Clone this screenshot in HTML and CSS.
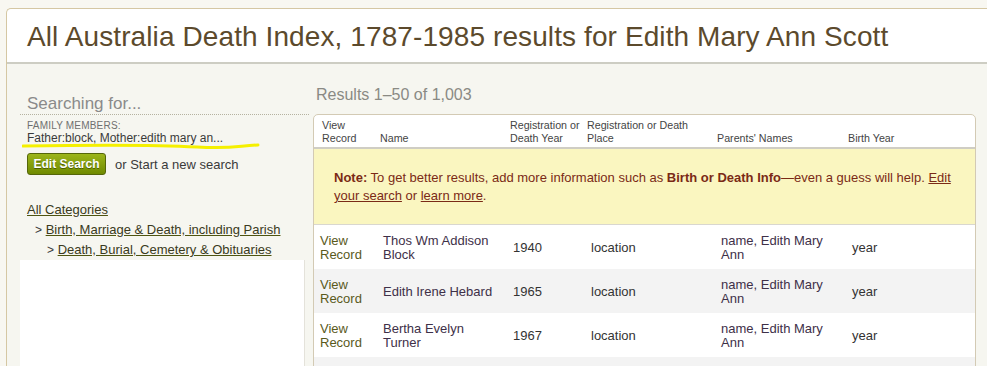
FILE: index.html
```html
<!DOCTYPE html>
<html lang="en">
<head>
    <meta charset="UTF-8">
    <title>All Australia Death Index results</title>
    <link rel="stylesheet" href="styles.css">
</head>
<body>
    <div class="frame">
        <div class="masthead">
            <h1 class="title">All Australia Death Index, 1787-1985 results for Edith Mary Ann Scott</h1>
        </div>

        <div class="content">
            <div class="sidebar">
                <div class="searching">Searching for...</div>
                <div class="family-label">FAMILY MEMBERS:</div>
                <div class="family-value">
                    Father:block, Mother:edith mary an...
                    <svg class="marker" width="240" height="8" viewBox="0 0 240 8">
                        <path d="M1 4 C 60 3, 140 3, 175 5 S 215 4, 236 3" stroke="#f5f000" stroke-width="3" fill="none" stroke-linecap="round"/>
                    </svg>
                </div>
                <div class="search-actions">
                    <button class="edit-btn">Edit Search</button>
                    <span class="new-search">or Start a new search</span>
                </div>

                <div class="categories">
                    <a href="#" class="cat-link">All Categories</a>
                    <div class="cat-sub"><span class="gt">&gt;</span> <a href="#" class="cat-link">Birth, Marriage &amp; Death, including Parish</a></div>
                    <div class="cat-sub deeper"><span class="gt">&gt;</span> <a href="#" class="cat-link">Death, Burial, Cemetery &amp; Obituaries</a></div>
                </div>

                <div class="ad-box"></div>
            </div>

            <div class="results">
                <div class="results-count">Results 1&ndash;50 of 1,003</div>

                <div class="table-card">
                    <div class="table-head">
                        <div>View<br>Record</div>
                        <div>Name</div>
                        <div>Registration or<br>Death Year</div>
                        <div>Registration or Death<br>Place</div>
                        <div>Parents' Names</div>
                        <div>Birth Year</div>
                    </div>

                    <div class="note">
                        <b>Note:</b> To get better results, add more information such as <b>Birth or Death Info</b>&mdash;even a guess will help. <a href="#">Edit your search</a> or <a href="#">learn more</a>.
                    </div>

                    <div class="row">
                        <a href="#" class="view">View<br>Record</a>
                        <div class="name">Thos Wm Addison Block</div>
                        <div>1940</div>
                        <div>location</div>
                        <div class="name">name, Edith Mary Ann</div>
                        <div>year</div>
                    </div>
                    <div class="row alt">
                        <a href="#" class="view">View<br>Record</a>
                        <div class="name">Edith Irene Hebard</div>
                        <div>1965</div>
                        <div>location</div>
                        <div class="name">name, Edith Mary Ann</div>
                        <div>year</div>
                    </div>
                    <div class="row">
                        <a href="#" class="view">View<br>Record</a>
                        <div class="name">Bertha Evelyn Turner</div>
                        <div>1967</div>
                        <div>location</div>
                        <div class="name">name, Edith Mary Ann</div>
                        <div>year</div>
                    </div>
                    <div class="row alt"></div>
                </div>
            </div>
        </div>
    </div>
</body>
</html>
```

FILE: styles.css
```css
* {
    margin: 0;
    padding: 0;
    box-sizing: border-box;
}

body {
    font-family: 'Liberation Sans', Arial, sans-serif;
    background: #f8f7f1;
    color: #333;
    overflow: hidden;
    height: 366px;
}

.frame {
    margin: 8px 0 0 6px;
    border-top: 1px solid #d5c7a3;
    border-left: 1px solid #d5c7a3;
    border-top-left-radius: 5px;
    background: #f6f6f0;
    height: 400px;
}

.masthead {
    background: #fff;
    height: 55px;
    border-bottom: 2px solid #cdcdc3;
    border-top-left-radius: 5px;
    padding: 12px 0 0 20px;
}

.title {
    font-size: 28px;
    font-weight: normal;
    color: #5c4a2c;
    letter-spacing: 0.1px;
    white-space: nowrap;
}

.content {
    display: flex;
}

/* left column */
.sidebar {
    width: 306px;
    padding: 31px 0 0 13px;
}

.searching,
.family-label,
.family-value,
.search-actions,
.categories {
    padding-left: 7px;
}

.searching {
    font-size: 17px;
    line-height: 18px;
    color: #8a8a8a;
    padding-bottom: 1px;
    border-bottom: 1px dotted #b5b2a0;
    margin-right: 4px;
}

.family-label {
    font-size: 10px;
    line-height: 11px;
    color: #6f6f6f;
    margin-top: 5px;
    letter-spacing: 0.2px;
}

.family-value {
    position: relative;
    font-size: 12px;
    line-height: 14px;
    color: #3a3a3a;
}

.marker {
    position: absolute;
    left: 2px;
    top: 11px;
}

.search-actions {
    display: flex;
    align-items: center;
    gap: 9px;
    margin-top: 8px;
}

.edit-btn {
    font-family: 'Liberation Sans', Arial, sans-serif;
    font-size: 12px;
    font-weight: bold;
    color: #fff;
    background: linear-gradient(#9cb51a, #6f8a00);
    border: 1px solid #55660a;
    border-radius: 3px;
    padding: 0 5px;
    height: 22px;
    width: 79px;
    text-shadow: 0 1px 0 #4c5c00;
}

.new-search {
    font-size: 13px;
    color: #3a3a3a;
}

.categories {
    margin-top: 25px;
    font-size: 13px;
    line-height: 20px;
    color: #3a3a3a;
}

.cat-link {
    color: #3a3a20;
    text-decoration: underline;
    text-decoration-color: #4e5410;
}

.cat-sub {
    padding-left: 8px;
}

.cat-sub.deeper {
    padding-left: 20px;
}

.gt {
    font-size: 12px;
}

.ad-box {
    width: 285px;
    height: 120px;
    background: #fff;
    border-right: 1px solid #e4e2da;
}

/* right column */
.results {
    flex: 1;
    padding-top: 22px;
    min-width: 0;
}

.results-count {
    font-size: 16px;
    color: #8a8a84;
    padding-left: 3px;
    margin-bottom: 10px;
}

.table-card {
    width: 663px;
    background: #fff;
    border: 1px solid #d3cab4;
    border-radius: 5px 5px 0 0;
}

.table-head {
    display: grid;
    grid-template-columns: 58px 130px 77px 130px 131px 1fr;
    padding: 4px 0 3px 8px;
    height: 34px;
    font-size: 10.7px;
    line-height: 13px;
    color: #444;
    align-items: end;
    border-bottom: 2px solid #cfcdc4;
}

.note {
    background: #faf6c0;
    color: #7a2a16;
    font-size: 13px;
    line-height: 18px;
    padding: 20px 10px 18px 20px;
    height: 76px;
    border-bottom: 1px solid #d9d7cf;
}

.note b {
    font-weight: bold;
}

.note a {
    color: #7a2a16;
}

.row {
    display: grid;
    grid-template-columns: 63px 130px 78px 130px 131px 1fr;
    align-items: center;
    padding: 1px 0 0 6px;
    height: 44px;
    font-size: 13px;
    line-height: 14px;
    color: #333;
}

.row.alt {
    background: #f3f3f3;
}

.view {
    color: #5a5a1c;
    text-decoration: none;
}

.name {
    color: #3e3048;
    padding-right: 10px;
}
```
